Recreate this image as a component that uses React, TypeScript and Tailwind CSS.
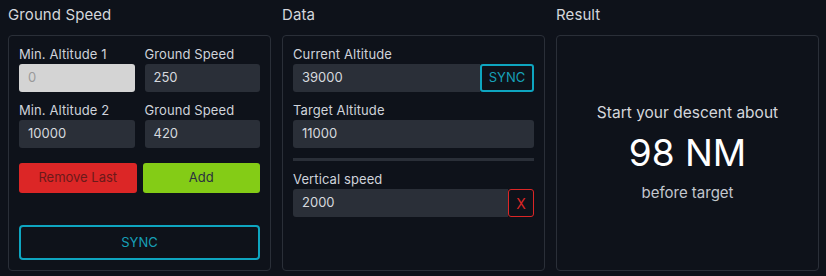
import React from "react";

const font = { fontFamily: "Inter, 'Noto Sans', sans-serif" };

function Label({ children }: { children: React.ReactNode }) {
  return <div className="text-[13px] leading-5 text-[#cfd3da] tracking-[0.1px]">{children}</div>;
}

function Input({ value, disabled, className = "" }: { value: string; disabled?: boolean; className?: string }) {
  return (
    <div
      className={
        "h-[28px] flex items-center px-[9px] text-[13px] rounded-[3px] " +
        (disabled ? "bg-[#d4d4d4] text-[#9a9a9a] " : "bg-[#2a2f38] text-[#d6d9de] ") +
        className
      }
    >
      {value}
    </div>
  );
}

export default function App() {
  return (
    <div style={font} className="w-[826px] h-[276px] bg-[#0e121a] pl-[8px] pt-[3px] flex gap-[11px]">
      {/* Ground Speed */}
      <div className="w-[263px] flex flex-col">
        <div className="text-[15px] leading-6 text-[#d4d7dc] mb-[8px] tracking-[0.1px]">Ground Speed</div>
        <div className="h-[236px] border border-[#2a2f38] rounded-[4px] px-[10px] pt-[8px] pb-[10px] flex flex-col">
          <div className="grid grid-cols-2 gap-x-[10px] gap-y-[8px]">
            <div>
              <Label>Min. Altitude 1</Label>
              <Input value="0" disabled />
            </div>
            <div>
              <Label>Ground Speed</Label>
              <Input value="250" />
            </div>
            <div>
              <Label>Min. Altitude 2</Label>
              <Input value="10000" />
            </div>
            <div>
              <Label>Ground Speed</Label>
              <Input value="420" />
            </div>
          </div>
          <div className="grid grid-cols-2 gap-[6px] mt-[15px]">
            <div className="h-[30px] rounded-[3px] bg-[#dc2626] text-[#6b1a1a] text-[13px] flex items-center justify-center">
              Remove Last
            </div>
            <div className="h-[30px] rounded-[3px] bg-[#84cc16] text-[#2a3140] text-[13px] flex items-center justify-center">
              Add
            </div>
          </div>
          <div className="mt-auto h-[35px] rounded-[4px] border-2 border-[#0ea5c0] text-[#17a0b8] text-[13px] flex items-center justify-center">
            SYNC
          </div>
        </div>
      </div>

      {/* Data */}
      <div className="w-[263px] flex flex-col">
        <div className="text-[15px] leading-6 text-[#d4d7dc] mb-[8px] tracking-[0.1px]">Data</div>
        <div className="h-[236px] border border-[#2a2f38] rounded-[4px] px-[10px] pt-[8px] pb-[10px] flex flex-col">
          <Label>Current Altitude</Label>
          <div className="flex">
            <Input value="39000" className="flex-1 rounded-r-none" />
            <div className="w-[54px] h-[28px] rounded-[3px] border-2 border-[#0ea5c0] text-[#17a0b8] text-[13px] flex items-center justify-center">
              SYNC
            </div>
          </div>
          <div className="mt-[8px]">
            <Label>Target Altitude</Label>
            <Input value="11000" />
          </div>
          <div className="h-[3px] bg-[#2a2f38] mt-[10px]" />
          <div className="mt-[8px]">
            <Label>Vertical speed</Label>
            <div className="flex">
              <Input value="2000" className="flex-1 rounded-r-none" />
              <div className="w-[26px] h-[28px] rounded-[3px] border-[1.5px] border-[#dc2626] text-[#dc2626] text-[14px] flex items-center justify-center">
                X
              </div>
            </div>
          </div>
        </div>
      </div>

      {/* Result */}
      <div className="w-[263px] flex flex-col">
        <div className="text-[15px] leading-6 text-[#d4d7dc] mb-[8px] tracking-[0.1px]">Result</div>
        <div className="h-[236px] border border-[#2a2f38] rounded-[4px] flex flex-col items-center justify-center">
          <div className="text-[15.5px] leading-5 text-[#d4d7dc]">Start your descent about</div>
          <div className="text-[37px] leading-[44px] text-white mt-[8px]">98 NM</div>
          <div className="text-[15px] leading-5 text-[#c3c7ce] mt-[8px]">before target</div>
        </div>
      </div>
    </div>
  );
}
